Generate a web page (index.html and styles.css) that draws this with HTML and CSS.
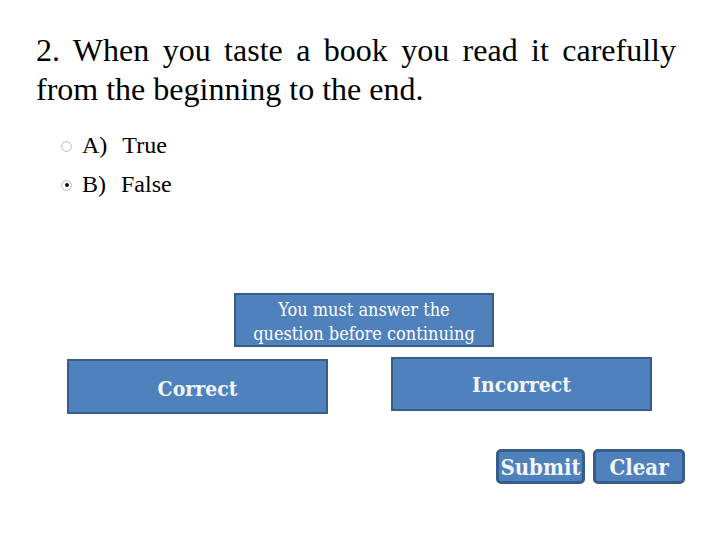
FILE: index.html
```html
<!DOCTYPE html>
<html>
<head>
<meta charset="utf-8">
<link rel="stylesheet" href="styles.css">
</head>
<body>
<div class="slide">
  <p class="question">2. When you taste a book you read it carefully from the beginning to the end.</p>
  <div class="options">
    <div class="option"><span class="radio"></span><span class="label">A)</span><span class="text">True</span></div>
    <div class="option"><span class="radio checked"></span><span class="label">B)</span><span class="text">False</span></div>
  </div>
  <div class="message">You must answer the<br>question before continuing</div>
  <div class="feedback">
    <div class="box correct">Correct</div>
    <div class="box incorrect">Incorrect</div>
  </div>
  <div class="actions">
    <button class="btn submit">Submit</button>
    <button class="btn clear">Clear</button>
  </div>
</div>
</body>
</html>
```
FILE: styles.css
```css
html, body {
  margin: 0;
  padding: 0;
  background: #ffffff;
}
.slide {
  width: 720px;
  height: 540px;
  overflow: hidden;
  font-family: "Liberation Serif", "Times New Roman", serif;
  color: #000;
}
.question {
  margin: 0;
  padding: 31px 0 0 36px;
  width: 640px;
  font-size: 32px;
  line-height: 39px;
  text-align: justify;
  text-align-last: left;
}
.options {
  margin-top: 24px;
  padding-left: 61px;
  display: flex;
  flex-direction: column;
  gap: 15px;
}
.option {
  display: flex;
  align-items: center;
  height: 24px;
  line-height: 24px;
  font-size: 24px;
}
.radio {
  box-sizing: border-box;
  width: 11px;
  height: 11px;
  border-radius: 50%;
  border: 1px solid #c4c4c4;
  background: radial-gradient(circle at 50% 55%, #ffffff 45%, #dedede 100%);
  margin-right: 10px;
  margin-top: 2px;
  position: relative;
  flex: none;
}
.radio.checked::after {
  content: "";
  position: absolute;
  left: 2.5px;
  top: 2.5px;
  width: 4px;
  height: 4px;
  border-radius: 50%;
  background: #111;
}
.label {
  margin-right: 15px;
}
.message {
  margin: 97px 0 0 234px;
  width: 256px;
  height: 50px;
  padding-top: 0;
  box-sizing: content-box;
  border: 2px solid #385d8a;
  background: #4f81bd;
  color: #ffffff;
  font-family: "DejaVu Serif Condensed", "DejaVu Serif", serif;
  font-size: 18px;
  line-height: 24px;
  text-align: center;
  display: flex;
  align-items: center;
  justify-content: center;
}
.message-inner { display: block; }
.feedback {
  display: flex;
  align-items: flex-start;
  margin-top: 10px;
  padding-left: 67px;
}
.box {
  box-sizing: border-box;
  width: 261px;
  border: 2px solid #385d8a;
  background: #4f81bd;
  color: #f2f6fb;
  font-family: "DejaVu Serif Condensed", "DejaVu Serif", serif;
  font-weight: bold;
  font-size: 21px;
  display: flex;
  align-items: center;
  justify-content: center;
}
.correct {
  height: 55px;
  margin-top: 2px;
  padding-top: 3px;
}
.incorrect {
  height: 54px;
  margin-left: 63px;
  padding-bottom: 0;
}
.actions {
  display: flex;
  justify-content: flex-end;
  gap: 8px;
  padding-right: 35px;
  margin-top: 35px;
}
.btn {
  box-sizing: border-box;
  height: 35px;
  border: 3px solid #385d8a;
  border-radius: 5px;
  background: #4f81bd;
  color: #f2f6fb;
  font-family: "DejaVu Serif Condensed", "DejaVu Serif", serif;
  font-weight: bold;
  font-size: 22px;
  padding: 0;
  display: flex;
  align-items: center;
  justify-content: center;
}
.submit { width: 89px; }
.clear { width: 92px; }
.message { padding-top: 4px; height: 46px; }
```
